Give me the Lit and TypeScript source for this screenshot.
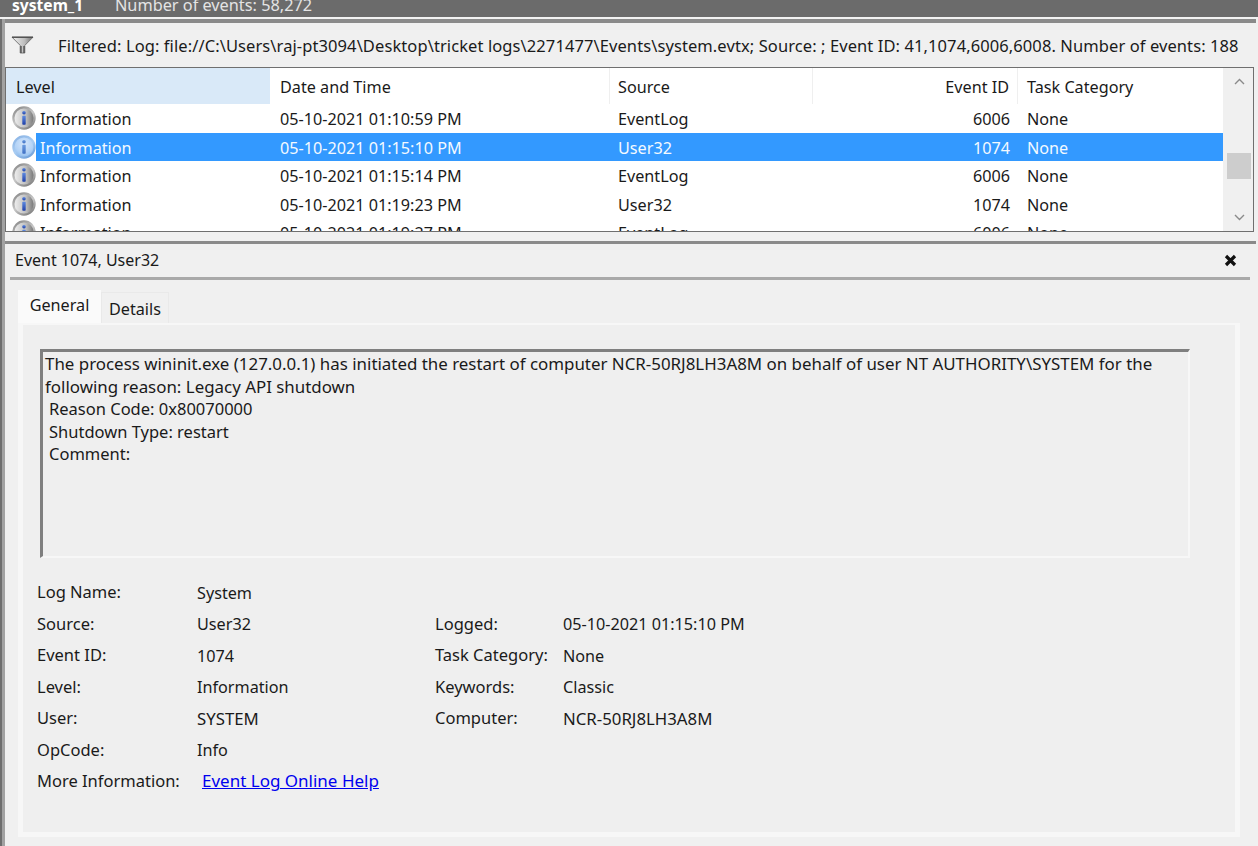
import { LitElement, html, css } from "lit";
import { customElement } from "lit/decorators.js";

const infoIcon = (sel = false) => {
  const k = sel ? "s" : "n";
  return html`<svg class="ico" viewBox="0 0 24 24" width="24" height="24">
    <defs>
      <linearGradient id="r${k}" x1="0.2" y1="0" x2="0.8" y2="1">
        <stop offset="0" stop-color="${sel ? "#8db6e6" : "#8e8e8e"}"/>
        <stop offset="0.5" stop-color="${sel ? "#a9cdf3" : "#c8c8c8"}"/>
        <stop offset="1" stop-color="${sel ? "#6f9fd8" : "#7f7f7f"}"/>
      </linearGradient>
      <radialGradient id="f${k}" cx="50%" cy="35%" r="65%">
        <stop offset="0" stop-color="${sel ? "#d5e6fb" : "#ffffff"}"/>
        <stop offset="0.65" stop-color="${sel ? "#b2d2f6" : "#f4f6fb"}"/>
        <stop offset="1" stop-color="${sel ? "#8dbbee" : "#cfd9ef"}"/>
      </radialGradient>
      <linearGradient id="i${k}" x1="0" y1="0" x2="0" y2="1">
        <stop offset="0" stop-color="${sel ? "#6a9be0" : "#5f8be0"}"/>
        <stop offset="1" stop-color="${sel ? "#3f70c4" : "#1f3fa8"}"/>
      </linearGradient>
    </defs>
    <circle cx="12" cy="12" r="10.6" fill="url(#f${k})" stroke="url(#r${k})" stroke-width="2.2"/>
    <circle cx="12" cy="6.8" r="1.8" fill="url(#i${k})"/>
    <rect x="10.3" y="9.8" width="3.4" height="9" rx="0.7" fill="url(#i${k})"/>
  </svg>`;
};

const rows = [
  ["05-10-2021 01:10:59 PM", "EventLog", "6006"],
  ["05-10-2021 01:15:10 PM", "User32", "1074"],
  ["05-10-2021 01:15:14 PM", "EventLog", "6006"],
  ["05-10-2021 01:19:23 PM", "User32", "1074"],
  ["05-10-2021 01:19:27 PM", "EventLog", "6006"],
];

@customElement("app-root")
export class AppRoot extends LitElement {
  static styles = css`
    :host { display: block; width: 1258px; height: 846px; overflow: hidden; background: #f0f0f0; color: #1a1a1a;
      font-family: "Noto Sans", "Open Sans", sans-serif; font-size: 16.2px; }
    .titlebar { height: 17px; background: #6b6b6b; color: #e4e4e4; line-height: 10px; overflow: hidden; display: flex; padding-left: 12px; box-sizing: border-box; font-size: 16.3px; }
    .titlebar b { width: 103px; font-weight: 700; color: #fff; font-size: 15.6px; }
    .sep { height: 2px; background: #f2f2f2; }
    .body { height: 827px; border-left: 2px solid #6e6e6e; box-sizing: border-box; display: flex; flex-direction: column; }
    .body-in { flex: 1; border-left: 3px solid #a2a2a2; display: flex; flex-direction: column; min-height: 0; }
    .top { border-top: 4px solid #8a8a8a; box-sizing: border-box; margin-right: 2px; display: flex; align-items: center; padding: 0 0 0 6px; gap: 24px; white-space: nowrap; font-size: 16.5px; letter-spacing: 0.09px; height: 48px; }
    .list { height: 165px; box-sizing: border-box; margin-right: 4px; background: #fff; border: 1px solid #6f6f6f; display: flex; overflow: hidden; }
    .table { flex: 1; min-width: 0; }
    .head, .row { display: grid; grid-template-columns: 266px 338px 203px 205px 206px; }
    .head { height: 36px; }
    .head > div { padding-top: 2px; line-height: 34px; padding-left: 8px; box-sizing: border-box; border-right: 1px solid #efefef; white-space: nowrap; }
    .head .lvl { background: #d9e9f8; border-right: 0; margin-right: 2px; padding-left: 10px; }
    .row { height: 28.5px; line-height: 26.5px; white-space: nowrap; position: relative; }
    .row > div { padding: 2px 0 0 8px; box-sizing: border-box; }
    .row .first { padding: 0 0 0 6px; display: flex; align-items: center; }
    .row .first span { padding-top: 2px; }
    .ico { flex: none; margin-right: 4px; position: relative; z-index: 1; }
    .row.sel { color: #f4f9ff; }
    .row.sel::before { content: ""; position: absolute; left: 30px; right: 0; top: 0; bottom: 0; background: #3399ff; }
    .row.sel > div { position: relative; }
    .row .task, .head .task { padding-left: 9px; }
    .row .num, .head .num { text-align: right; padding-right: 8px; }
    .scroll { width: 30px; box-sizing: border-box; padding-left: 2px; background: #f0f0f0; display: flex; flex-direction: column; justify-content: space-between; align-items: center; position: relative; }
    .scroll svg { margin: 10px 0; }
    .thumb { position: absolute; left: 4px; right: 2px; top: 85px; height: 26px; background: #cdcdcd; }
    .gutter { height: 9px; }
    .detail { flex: 1; min-height: 0; border-top: 3px solid #8a8a8a; margin-right: 2px; display: flex; flex-direction: column; }
    .dtitle { height: 33px; box-sizing: border-box; padding: 0 6px 2px 10px; display: flex; align-items: center; justify-content: space-between; font-size: 16px; }
    .close { margin: 2px 13px 0 0; }
    .rule { height: 3px; background: #a9a9a9; margin: 0 6px 0 5px; }
    .tabs { display: flex; align-items: flex-end; margin: 10px 0 0 13px; height: 33px; font-size: 16.2px; }
    .tab { box-sizing: border-box; text-align: center; }
    .tab.on { width: 83px; height: 33px; line-height: 31px; background: #fafafa; }
    .tab.off { width: 68px; height: 31px; line-height: 32px; border: 1px solid #e9e9e9; border-width: 1px 1px 0 1px; }
    .panel { width: 1222px; height: 514px; margin-left: 13px; box-sizing: border-box; background: #efefef; border: 5px solid #f7f7f7; border-top-width: 2px; padding: 24px 45px 0 17px; }
    .msg { height: 209px; box-sizing: border-box; border: 2px solid #f7f7f7; border-top: 3px solid #7f7f7f; border-left: 3px solid #7f7f7f; padding: 1px 0 0 2px; line-height: 22.5px; font-size: 16.9px; }
    .msg div { white-space: nowrap; }
    .msg .ind { padding-left: 4px; font-size: 16.5px; }
    .grid { display: grid; grid-template-columns: 160px 238px 128px 1fr; grid-auto-rows: 31.5px; margin: 19px 0 0 -3px; align-items: center; font-size: 16.2px; }
    .lab { position: relative; top: -1px; font-size: 16.5px; white-space: nowrap; }
    .cap { font-size: 16.8px; }
    a { color: #0000ee; padding-left: 5px; font-size: 17px; position: relative; top: -1px; }
  `;

  render() {
    return html`
      <div class="titlebar"><b>system_1</b><span>Number of events: 58,272</span></div>
      <div class="sep"></div>
      <div class="body"><div class="body-in">
        <div class="top">
          <svg width="23" height="18" viewBox="0 0 23 18"><defs><linearGradient id="fn" x1="0" y1="0" x2="1" y2="0"><stop offset="0" stop-color="#f2f2f2"/><stop offset="0.6" stop-color="#bdbdbd"/><stop offset="1" stop-color="#6f6f6f"/></linearGradient></defs><path d="M1 1.2h21l-8.2 8.2v7.6h-4.6V9.4z" fill="url(#fn)" stroke="#7a7a7a" stroke-width="1" stroke-linejoin="round"/><path d="M1 1.2h21" stroke="#444" stroke-width="1.2"/><path d="M10 10v7M13 10v7" stroke="#444" stroke-width="1.2"/></svg>
          <span>Filtered: Log: file://C:\\Users\\raj-pt3094\\Desktop\\tricket logs\\2271477\\Events\\system.evtx; Source: ; Event ID: 41,1074,6006,6008. Number of events: 188</span>
        </div>
        <div class="list">
          <div class="table">
            <div class="head"><div class="lvl">Level</div><div>Date and Time</div><div>Source</div><div class="num">Event ID</div><div class="task">Task Category</div></div>
            ${rows.map((r, i) => html`<div class="row ${i === 1 ? "sel" : ""}">
              <div class="first">${infoIcon(i === 1)}<span>Information</span></div>
              <div>${r[0]}</div><div>${r[1]}</div><div class="num">${r[2]}</div><div class="task">None</div>
            </div>`)}
          </div>
          <div class="scroll">
            <svg width="11" height="7" viewBox="0 0 11 7"><path d="M1 6l4.5-4.5L10 6" fill="none" stroke="#8a8a8a" stroke-width="1.4"/></svg>
            <div class="thumb"></div>
            <svg width="11" height="7" viewBox="0 0 11 7"><path d="M1 1l4.5 4.5L10 1" fill="none" stroke="#8a8a8a" stroke-width="1.4"/></svg>
          </div>
        </div>
        <div class="gutter"></div>
        <div class="detail">
          <div class="dtitle"><span>Event 1074, User32</span>
            <svg class="close" width="13" height="13" viewBox="0 0 13 13"><path d="M2 2l9 9M11 2l-9 9" stroke="#111" stroke-width="3.2"/></svg></div>
          <div class="rule"></div>
          <div class="tabs"><div class="tab on">General</div><div class="tab off">Details</div></div>
          <div class="panel">
            <div class="msg">
              <div>The process wininit.exe (127.0.0.1) has initiated the restart of computer NCR-50RJ8LH3A8M on behalf of user NT AUTHORITY\\SYSTEM for the</div>
              <div>following reason: Legacy API shutdown</div>
              <div class="ind">Reason Code: 0x80070000</div>
              <div class="ind">Shutdown Type: restart</div>
              <div class="ind">Comment:</div>
            </div>
            <div class="grid">
              <div class="lab">Log Name:</div><div>System</div><div></div><div></div>
              <div class="lab">Source:</div><div>User32</div><div class="lab">Logged:</div><div>05-10-2021 01:15:10 PM</div>
              <div class="lab">Event ID:</div><div>1074</div><div class="lab">Task Category:</div><div>None</div>
              <div class="lab">Level:</div><div>Information</div><div class="lab">Keywords:</div><div>Classic</div>
              <div class="lab">User:</div><div class="cap">SYSTEM</div><div class="lab">Computer:</div><div class="cap">NCR-50RJ8LH3A8M</div>
              <div class="lab">OpCode:</div><div>Info</div><div></div><div></div>
              <div class="lab">More Information:</div><div><a href="#">Event Log Online Help</a></div><div></div><div></div>
            </div>
          </div>
        </div>
      </div></div>
    `;
  }
}
